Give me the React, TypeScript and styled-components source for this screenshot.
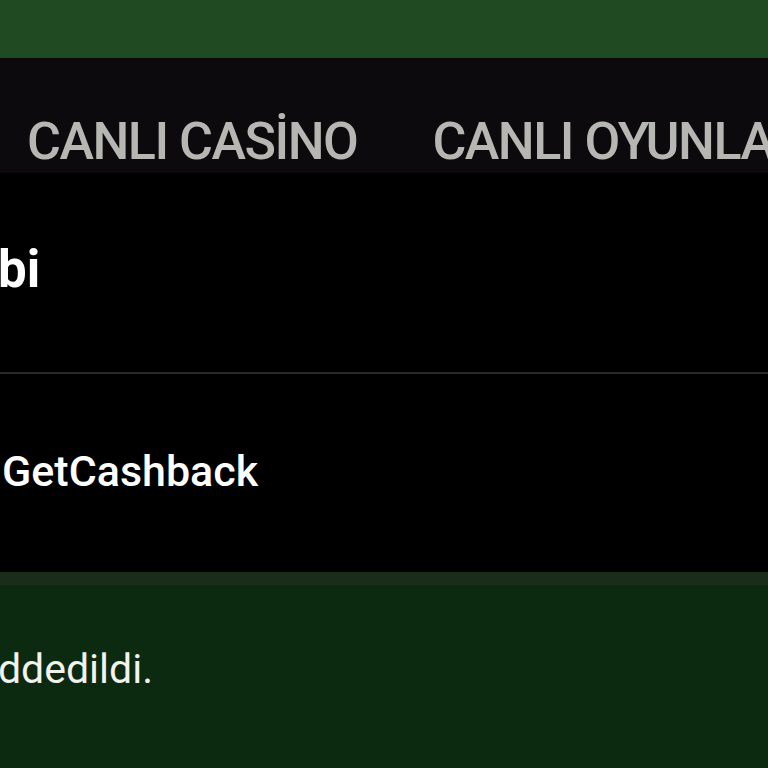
import React from "react";
import styled, { createGlobalStyle } from "styled-components";

const GlobalStyle = createGlobalStyle`
  html, body {
    margin: 0;
    padding: 0;
    background: #000000;
    overflow: hidden;
  }
  body {
    font-family: Roboto, "Noto Sans", sans-serif;
  }
`;

const Page = styled.div`
  display: flex;
  flex-direction: column;
  width: 768px;
  height: 768px;
  overflow: hidden;
`;

const TopBar = styled.div`
  height: 58px;
  background: #1f4a22;
  flex-shrink: 0;
`;

const Nav = styled.nav`
  height: 115px;
  background: #0c0a0c;
  display: flex;
  align-items: flex-end;
  gap: 75px;
  padding: 0 0 5px 27px;
  box-sizing: border-box;
  white-space: nowrap;
  flex-shrink: 0;
`;

const NavItem = styled.a`
  display: inline-block;
  color: #b6b6b2;
  font-size: 52px;
  font-weight: 500;
  line-height: 1;
  letter-spacing: -1.5px;
  text-decoration: none;
`;

const Row = styled.div<{ $divider?: boolean }>`
  height: ${(p) => (p.$divider ? "201px" : "198px")};
  background: #000000;
  display: flex;
  align-items: center;
  box-sizing: border-box;
  border-bottom: ${(p) => (p.$divider ? "2px solid #262b26" : "none")};
  flex-shrink: 0;
`;

const RowText = styled.span<{ $bold?: boolean }>`
  color: #ffffff;
  font-size: ${(p) => (p.$bold ? "51px" : "43px")};
  font-weight: ${(p) => (p.$bold ? 700 : 500)};
  line-height: 1;
  margin-left: ${(p) => (p.$bold ? "-2px" : "2px")};
  margin-top: ${(p) => (p.$bold ? "-6px" : "-4px")};
`;

const Strip = styled.div`
  height: 13px;
  background: #1a2c1a;
  flex-shrink: 0;
`;

const Notice = styled.div`
  flex: 1;
  background: #0c2a10;
  display: flex;
  align-items: flex-start;
  padding-top: 56px;
  box-sizing: border-box;
`;

const NoticeText = styled.p`
  margin: 0 0 0 -2px;
  color: #f2f2ee;
  font-size: 41px;
  font-weight: 400;
  line-height: 1.4;
`;

const App = () => {
  return (
    <Page>
      <GlobalStyle />
      <TopBar />
      <Nav>
        <NavItem href="#">CANLI CASİNO</NavItem>
        <NavItem href="#">CANLI OYUNLAR</NavItem>
      </Nav>
      <Row $divider>
        <RowText $bold>bi</RowText>
      </Row>
      <Row>
        <RowText>GetCashback</RowText>
      </Row>
      <Strip />
      <Notice>
        <NoticeText>ddedildi.</NoticeText>
      </Notice>
    </Page>
  );
};

export default App;
